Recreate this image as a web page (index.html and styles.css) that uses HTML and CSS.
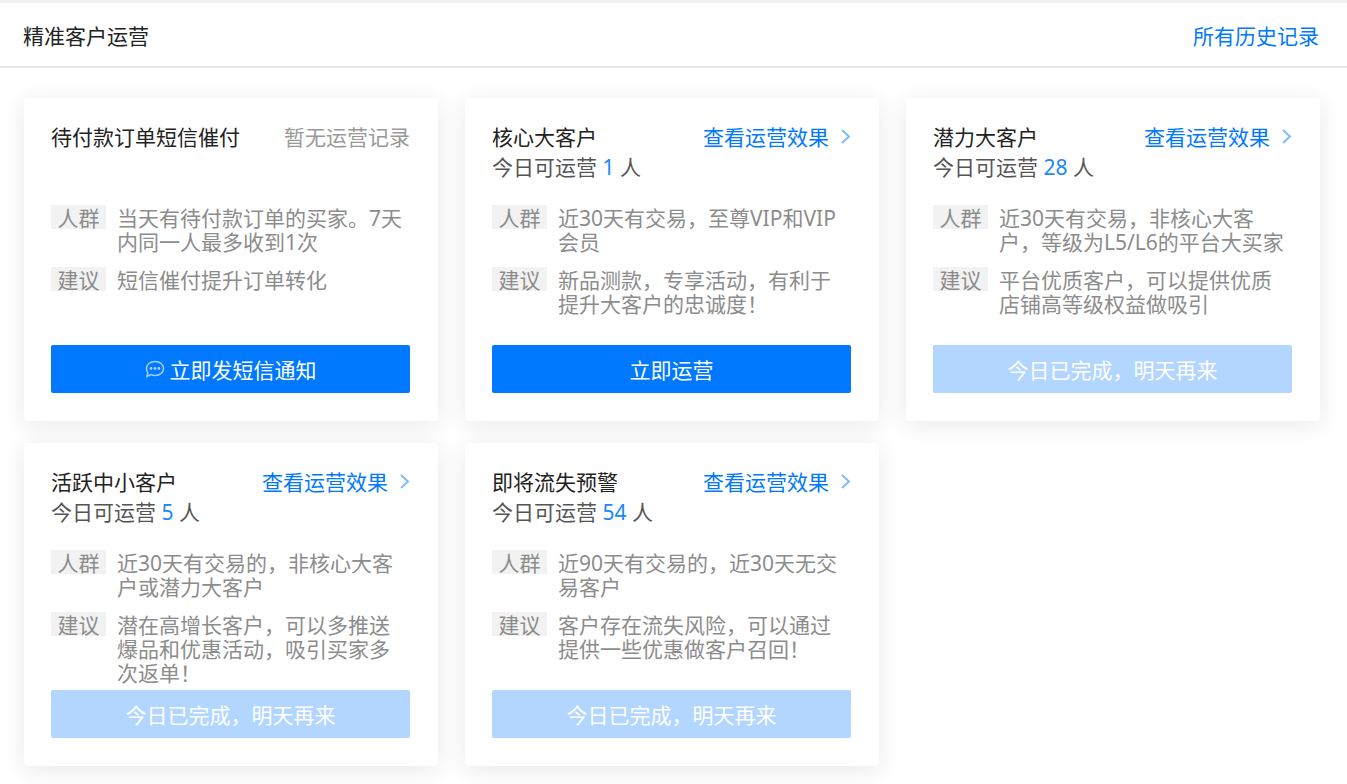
FILE: index.html
```html
<!DOCTYPE html>
<html lang="zh-CN">
<head>
    <meta charset="utf-8">
    <title>精准客户运营</title>
    <link rel="stylesheet" href="styles.css">
</head>
<body>
    <header class="header">
        <h1 class="header-title">精准客户运营</h1>
        <a class="link" href="#history">所有历史记录</a>
    </header>

    <main class="cards">
        <section class="card">
            <div class="card-head">
                <h2 class="card-title">待付款订单短信催付</h2>
                <span class="no-record">暂无运营记录</span>
            </div>
            <p class="count"></p>
            <dl class="info">
                <dt class="tag">人群</dt>
                <dd class="desc">当天有待付款订单的买家。7天内同一人最多收到1次</dd>
                <dt class="tag">建议</dt>
                <dd class="desc">短信催付提升订单转化</dd>
            </dl>
            <button class="btn" type="button">
                <svg class="icon-chat" viewBox="0 0 20 18" aria-hidden="true">
                    <path d="M10 1.5c4.900 0 8.500 3 8.500 7s-3.600 7-8.500 7c-1.600 0-3-.3-4.200-.9L2 16.500l.8-3.700C2 11.600 1.500 10.100 1.500 8.500c0-4 3.600-7 8.500-7z"/>
                    <circle cx="6" cy="8.500" r="0.700"/>
                    <circle cx="10" cy="8.500" r="0.700"/>
                    <circle cx="14" cy="8.500" r="0.700"/>
                </svg>
                立即发短信通知
            </button>
        </section>

        <section class="card">
            <div class="card-head">
                <h2 class="card-title">核心大客户</h2>
                <a class="link" href="#effect">查看运营效果<svg class="icon-arrow" viewBox="0 0 10 16" aria-hidden="true"><path d="M1 1l7 6.500L1 14"/></svg></a>
            </div>
            <p class="count">今日可运营 <span class="num">1</span> 人</p>
            <dl class="info">
                <dt class="tag">人群</dt>
                <dd class="desc">近30天有交易，至尊VIP和VIP会员</dd>
                <dt class="tag">建议</dt>
                <dd class="desc">新品测款，专享活动，有利于提升大客户的忠诚度！</dd>
            </dl>
            <button class="btn" type="button">立即运营</button>
        </section>

        <section class="card">
            <div class="card-head">
                <h2 class="card-title">潜力大客户</h2>
                <a class="link" href="#effect">查看运营效果<svg class="icon-arrow" viewBox="0 0 10 16" aria-hidden="true"><path d="M1 1l7 6.500L1 14"/></svg></a>
            </div>
            <p class="count">今日可运营 <span class="num">28</span> 人</p>
            <dl class="info">
                <dt class="tag">人群</dt>
                <dd class="desc">近30天有交易，非核心大客户，等级为L5/L6的平台大买家</dd>
                <dt class="tag">建议</dt>
                <dd class="desc">平台优质客户，可以提供优质店铺高等级权益做吸引</dd>
            </dl>
            <button class="btn" type="button" disabled>今日已完成，明天再来</button>
        </section>

        <section class="card">
            <div class="card-head">
                <h2 class="card-title">活跃中小客户</h2>
                <a class="link" href="#effect">查看运营效果<svg class="icon-arrow" viewBox="0 0 10 16" aria-hidden="true"><path d="M1 1l7 6.500L1 14"/></svg></a>
            </div>
            <p class="count">今日可运营 <span class="num">5</span> 人</p>
            <dl class="info">
                <dt class="tag">人群</dt>
                <dd class="desc">近30天有交易的，非核心大客户或潜力大客户</dd>
                <dt class="tag">建议</dt>
                <dd class="desc">潜在高增长客户，可以多推送爆品和优惠活动，吸引买家多次返单！</dd>
            </dl>
            <button class="btn" type="button" disabled>今日已完成，明天再来</button>
        </section>

        <section class="card">
            <div class="card-head">
                <h2 class="card-title">即将流失预警</h2>
                <a class="link" href="#effect">查看运营效果<svg class="icon-arrow" viewBox="0 0 10 16" aria-hidden="true"><path d="M1 1l7 6.500L1 14"/></svg></a>
            </div>
            <p class="count">今日可运营 <span class="num">54</span> 人</p>
            <dl class="info">
                <dt class="tag">人群</dt>
                <dd class="desc">近90天有交易的，近30天无交易客户</dd>
                <dt class="tag">建议</dt>
                <dd class="desc">客户存在流失风险，可以通过提供一些优惠做客户召回！</dd>
            </dl>
            <button class="btn" type="button" disabled>今日已完成，明天再来</button>
        </section>
    </main>
</body>
</html>
```

FILE: styles.css
```css
* {
    box-sizing: border-box;
}
body {
    margin: 0;
    border-top: 3px solid #f1f1f1;
    background: #fff;
    color: #222;
    font-family: "Noto Sans", "Noto Sans CJK SC", sans-serif;
    font-size: 21px;
    line-height: 30px;
}
h1, h2, p, dl, dd {
    margin: 0;
    font-size: 21px;
    font-weight: 400;
}
.header {
    display: flex;
    justify-content: space-between;
    align-items: center;
    padding: 18px 28px 15px 23px;
    border-bottom: 2px solid #e6e6e6;
}
.link {
    display: flex;
    align-items: center;
    color: #0078ff;
    text-decoration: none;
}
.cards {
    display: grid;
    grid-template-columns: repeat(3, 1fr);
    grid-auto-rows: 1fr;
    gap: 22px 27px;
    padding: 30px 27px 18px 24px;
}
.card {
    display: flex;
    flex-direction: column;
    padding: 24px 28px 28px 27px;
    border-radius: 4px;
    background: #fff;
    box-shadow: 0 4px 24px rgba(0, 0, 0, 0.09);
}
.card-head {
    display: flex;
    justify-content: space-between;
}
.no-record {
    color: #999;
}
.icon-arrow {
    width: 10px;
    height: 16px;
    margin-left: 12px;
    fill: none;
    stroke: #80bbff;
    stroke-width: 2;
}
.count {
    min-height: 30px;
    color: #555;
}
.num {
    color: #1a86ff;
}
.info {
    display: grid;
    grid-template-columns: 55px 1fr;
    gap: 13px 11px;
    margin-top: 23px;
    padding: 0 8px 5px 0;
    color: #8c8c8c;
    line-height: 24px;
}
.tag {
    height: 24px;
    background: #f2f2f2;
    line-height: 26px;
    text-align: center;
}
.desc {
    padding-top: 1px;
}
.btn {
    display: flex;
    justify-content: center;
    align-items: center;
    gap: 5px;
    height: 48px;
    margin-top: auto;
    padding: 0;
    border: none;
    border-radius: 2px;
    background: #0078ff;
    color: #fff;
    font-family: inherit;
    font-size: 21px;
    cursor: pointer;
}
.btn:disabled {
    background: #b2d6ff;
    cursor: default;
}
.icon-chat {
    width: 20px;
    height: 18px;
    fill: none;
    stroke: #a6d0ff;
    stroke-width: 1.5;
}
```
